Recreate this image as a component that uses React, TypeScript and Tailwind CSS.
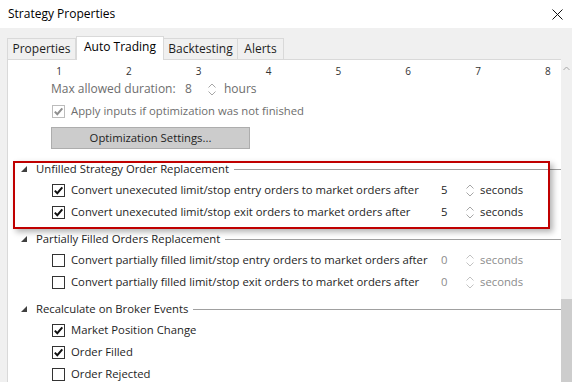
import React from 'react'

const ticks = [1, 2, 3, 4, 5, 6, 7, 8]

function Spinner({ muted }: { muted?: boolean }) {
  return (
    <svg width="8" height="13" viewBox="0 0 8 13" className="shrink-0">
      <path d="M0.5 4.5 L4 1 L7.5 4.5" fill="none" stroke={muted ? '#c2c2c2' : '#a6a6a6'} strokeWidth="1" />
      <path d="M0.5 8.5 L4 12 L7.5 8.5" fill="none" stroke={muted ? '#c2c2c2' : '#a6a6a6'} strokeWidth="1" />
    </svg>
  )
}

function Checkbox({ checked, disabled }: { checked?: boolean; disabled?: boolean }) {
  return (
    <span
      className={`flex h-[13px] w-[13px] shrink-0 items-center justify-center border bg-white ${
        disabled ? 'border-[#bcbcbc]' : 'border-[#333333]'
      }`}
    >
      {checked && (
        <svg width="11" height="11" viewBox="0 0 11 11">
          <path
            d="M1.8 5.6 L4.3 8.2 L9.3 2.4"
            fill="none"
            stroke={disabled ? '#8f8f8f' : '#111111'}
            strokeWidth="2"
          />
        </svg>
      )}
    </span>
  )
}

function SectionHeader({ title }: { title: string }) {
  return (
    <div className="flex h-[20px] items-center">
      <span className="ml-[13px] w-[15px]">
        <svg width="6" height="6" viewBox="0 0 6 6">
          <path d="M6 0 L6 6 L0 6 Z" fill="#404040" />
        </svg>
      </span>
      <span className="whitespace-nowrap text-[#1e1e1e]">{title}</span>
      <span className="ml-[5px] h-px flex-1 bg-[#a0a0a0]" />
    </div>
  )
}

interface OrderRowProps {
  label: string
  value: number
  checked?: boolean
  muted?: boolean
}

function OrderRow({ label, value, checked, muted }: OrderRowProps) {
  return (
    <div className="flex h-[22px] items-center pl-[44px]">
      <Checkbox checked={checked} />
      <span className="ml-[6px] w-[370px] whitespace-nowrap text-[#1e1e1e]">{label}</span>
      <span className={`w-[25px] ${muted ? 'text-[#8c8c8c]' : 'text-[#1e1e1e]'}`}>{value}</span>
      <Spinner muted={muted} />
      <span className={`ml-[6px] ${muted ? 'text-[#8c8c8c]' : 'text-[#1e1e1e]'}`}>seconds</span>
    </div>
  )
}

function CheckRow({ label, checked }: { label: string; checked?: boolean }) {
  return (
    <div className="flex h-[22px] items-center pl-[44px]">
      <Checkbox checked={checked} />
      <span className="ml-[6px] whitespace-nowrap text-[#1e1e1e]">{label}</span>
    </div>
  )
}

export default function App() {
  return (
    <div className="flex h-[382px] w-[572px] flex-col overflow-hidden bg-white font-['Open_Sans',sans-serif] text-[11.3px] leading-none">
      {/* Title bar */}
      <div className="flex h-[28px] shrink-0 items-center justify-between pl-[8px] pr-[9px]">
        <span className="text-[12px] text-black">Strategy Properties</span>
        <svg width="11" height="11" viewBox="0 0 11 11">
          <path d="M0.5 0.5 L10.5 10.5 M10.5 0.5 L0.5 10.5" stroke="#111" strokeWidth="1" />
        </svg>
      </div>

      {/* Tabs */}
      <div className="flex h-[31px] shrink-0 items-end bg-[#f0f0f0] pl-[7px] text-[12px]">
        <div className="flex h-[21px] w-[69px] items-center justify-center border border-b-0 border-[#d9d9d9] text-[#1e1e1e]">Properties</div>
        <div className="relative -mb-px flex h-[24px] w-[88px] items-center justify-center border border-b-0 border-[#d9d9d9] bg-white pb-[3px] text-black">
          Auto Trading
        </div>
        <div className="flex h-[21px] w-[74px] items-center justify-center border border-b-0 border-l-0 border-[#d9d9d9] text-[#1e1e1e]">Backtesting</div>
        <div className="flex h-[21px] w-[46px] items-center justify-center border border-b-0 border-l-0 border-[#d9d9d9] text-[#1e1e1e]">Alerts</div>
      </div>

      <div className="flex min-h-0 flex-1 bg-[#f0f0f0]">
        {/* Content */}
        <div className="ml-[7px] flex-1 overflow-hidden border-l border-t border-[#d9d9d9] bg-white pt-[2px]">
          <div className="flex h-[18px] items-center justify-between pl-[43px] pr-[5px] text-[10px] text-[#333]">
            {ticks.map((t) => (
              <span key={t} className="w-[16px] text-center">
                {t}
              </span>
            ))}
          </div>

          <div className="flex h-[18px] items-center pl-[43px] text-[12px] text-[#6d6d6d]">
            <span className="w-[134px]">Max allowed duration:</span>
            <span className="w-[23px]">8</span>
            <Spinner />
            <span className="ml-[8px]">hours</span>
          </div>

          <div className="mt-[2px] flex h-[22px] items-center pl-[44px] text-[#6d6d6d]">
            <Checkbox checked disabled />
            <span className="ml-[6px] whitespace-nowrap">Apply inputs if optimization was not finished</span>
          </div>

          <div className="ml-[43px] mt-[5px] flex h-[22px] w-[199px] items-center justify-center border border-[#adadad] bg-[#cccccc] text-[#1e1e1e]">
            Optimization Settings...
          </div>

          {/* Unfilled */}
          <div className="relative mt-[10px] pb-[6px]">
            <SectionHeader title="Unfilled Strategy Order Replacement" />
            <OrderRow label="Convert unexecuted limit/stop entry orders to market orders after" value={5} checked />
            <OrderRow label="Convert unexecuted limit/stop exit orders to market orders after" value={5} checked />
            {/* highlight annotation */}
            <div className="pointer-events-none absolute bottom-0 left-[5px] top-[2px] w-[537px] border-2 border-[#c00000] shadow-[3px_3px_6px_rgba(0,0,0,0.3)]" />
          </div>

          {/* Partially filled */}
          <div className="pb-[6px]">
            <SectionHeader title="Partially Filled Orders Replacement" />
            <OrderRow label="Convert partially filled limit/stop entry orders to market orders after" value={0} muted />
            <OrderRow label="Convert partially filled limit/stop exit orders to market orders after" value={0} muted />
          </div>

          {/* Broker events */}
          <div>
            <SectionHeader title="Recalculate on Broker Events" />
            <CheckRow label="Market Position Change" checked />
            <CheckRow label="Order Filled" checked />
            <CheckRow label="Order Rejected" />
          </div>
        </div>

        {/* Scrollbar */}
        <div className="flex w-[11px] shrink-0 flex-col bg-[#f0f0f0]">
          <div className="flex h-[240px] justify-center pt-[7px]">
            <svg width="7" height="5" viewBox="0 0 7 5">
              <path d="M0.5 4 L3.5 1 L6.5 4" fill="none" stroke="#a6a6a6" strokeWidth="1" />
            </svg>
          </div>
          <div className="flex-1 bg-[#cdcdcd]" />
        </div>
      </div>
    </div>
  )
}
